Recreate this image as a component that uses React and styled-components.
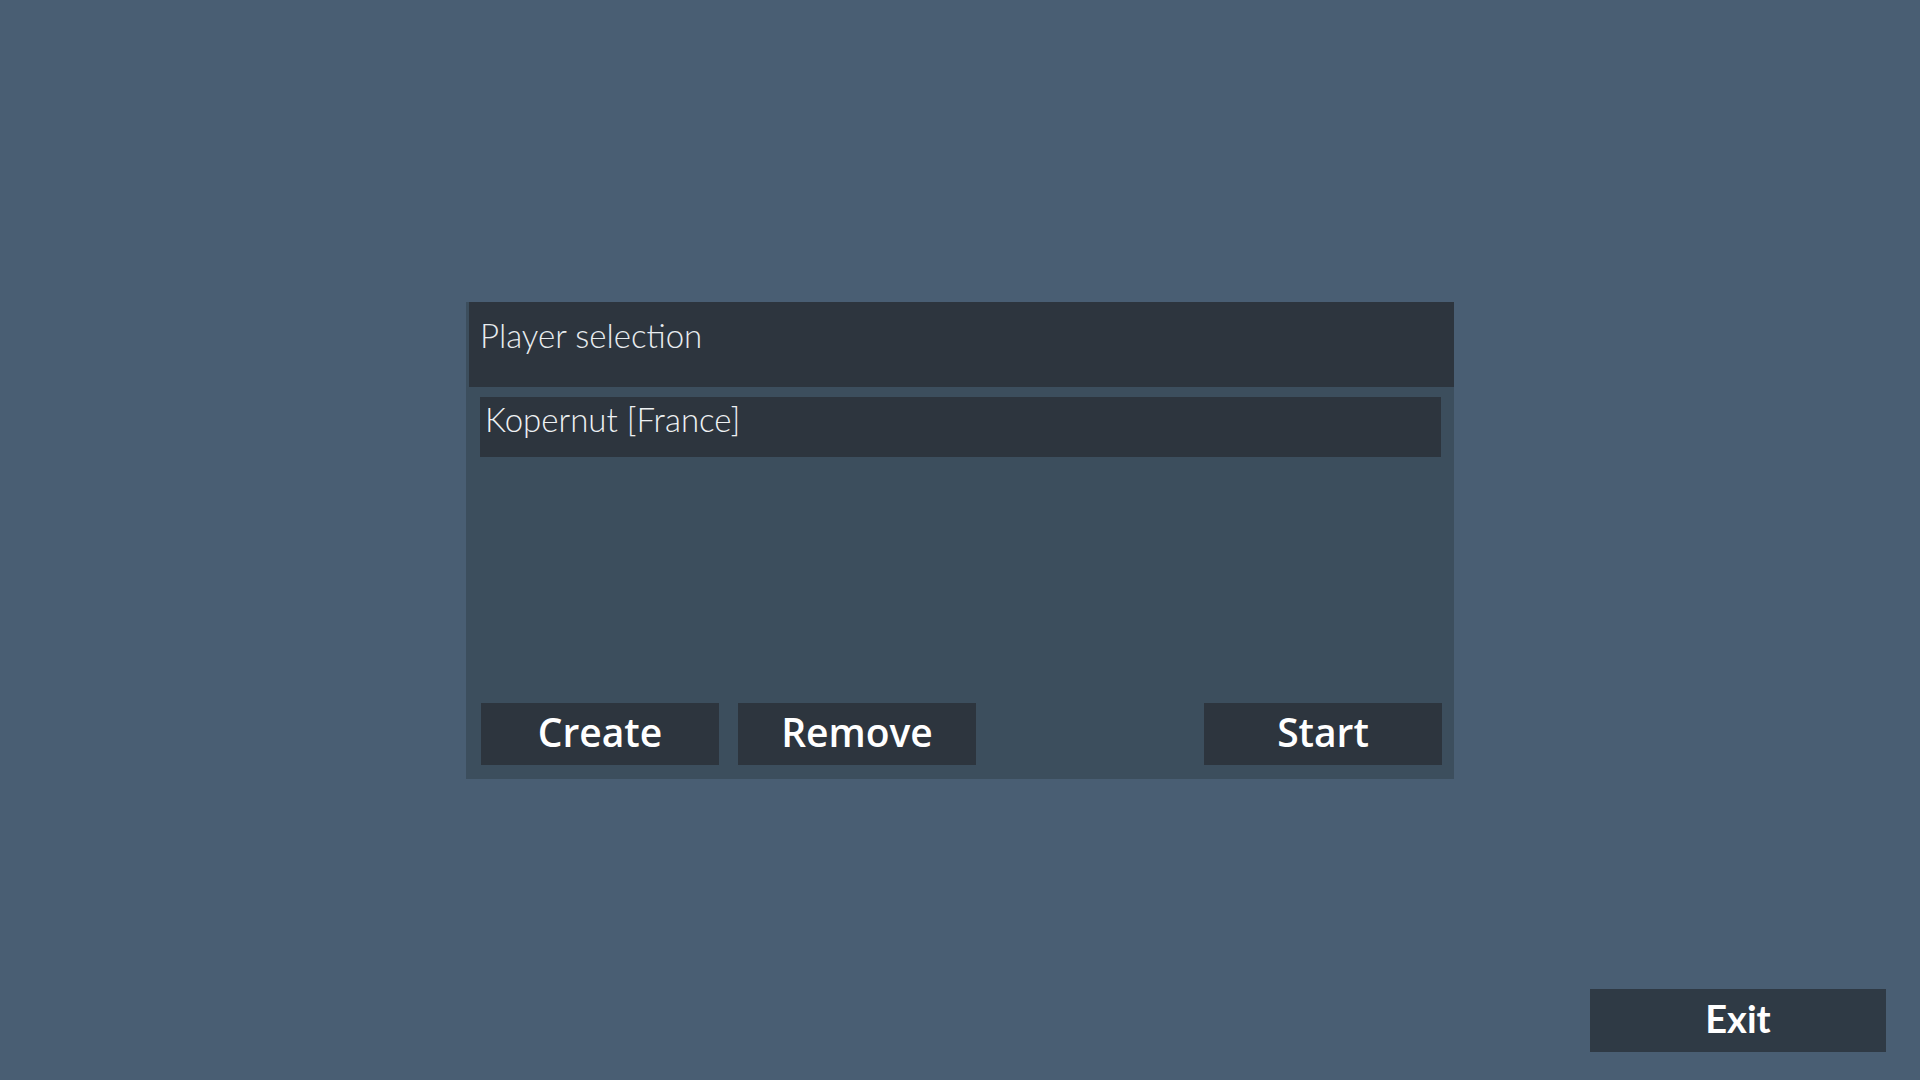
import React from 'react';
import styled, { createGlobalStyle } from 'styled-components';

const GlobalStyle = createGlobalStyle`
    html, body, #root {
        margin: 0;
        height: 100%;
    }

    body {
        background: #495e73;
        overflow: hidden;
    }
`

const Screen = styled.div`
    display: grid;
    grid-template: 1fr / 1fr;
    height: 100vh;
    width: 100vw;

    & > * {
        grid-area: 1 / 1;
    }
`

const Panel = styled.div`
    align-self: center;
    background: #3c4e5d;
    display: flex;
    flex-direction: column;
    height: 477px;
    justify-self: center;
    width: 988px;
`

const Header = styled.div`
    background: #2d353e;
    box-sizing: border-box;
    color: #e8ecef;
    font-family: Lato, "Open Sans", sans-serif;
    font-size: 33px;
    font-weight: 300;
    height: 85px;
    line-height: 1;
    margin-left: 3px;
    padding: 17px 0 0 11px;
`

const Body = styled.div`
    display: flex;
    flex: 1;
    flex-direction: column;
    padding: 10px 13px 14px 14px;
`

const List = styled.div`
    display: flex;
    flex: 1;
    flex-direction: column;
`

const PlayerItem = styled.div`
    background: ${props => props.selected ? '#2d353e' : 'transparent'};
    box-sizing: border-box;
    color: #eef1f3;
    cursor: pointer;
    font-family: Lato, "Open Sans", sans-serif;
    font-size: 33px;
    font-weight: 300;
    height: 60px;
    line-height: 1;
    padding: 6px 0 0 5px;
`

const ButtonRow = styled.div`
    display: flex;
    gap: 19px;
    padding-left: 1px;
    margin-right: -1px;
`

const Spacer = styled.div`
    flex: 1;
`

const Button = styled.button`
    align-items: center;
    background: #2d353e;
    border: none;
    box-sizing: border-box;
    color: #ffffff;
    cursor: pointer;
    display: flex;
    font-family: ${props => props.lato ? 'Lato' : '"Open Sans"'}, sans-serif;
    font-size: ${props => props.lato ? '38px' : '39px'};
    font-weight: ${props => props.lato ? 700 : 600};
    height: ${props => props.lato ? '63px' : '62px'};
    justify-content: center;
    padding: 0 0 5px;
    width: ${props => props.lato ? '296px' : '238px'};
`

const ExitButton = styled(Button)`
    align-self: end;
    justify-self: end;
    margin: 0 34px 28px 0;
    background: #2f3a45;
`

const App = () => {
    return (
        <>
            <GlobalStyle />
            <Screen>
                <Panel>
                    <Header>Player selection</Header>
                    <Body>
                        <List>
                            <PlayerItem selected>Kopernut [France]</PlayerItem>
                        </List>
                        <ButtonRow>
                            <Button>Create</Button>
                            <Button>Remove</Button>
                            <Spacer />
                            <Button>Start</Button>
                        </ButtonRow>
                    </Body>
                </Panel>
                <ExitButton lato>Exit</ExitButton>
            </Screen>
        </>
    )
}

export default App;
